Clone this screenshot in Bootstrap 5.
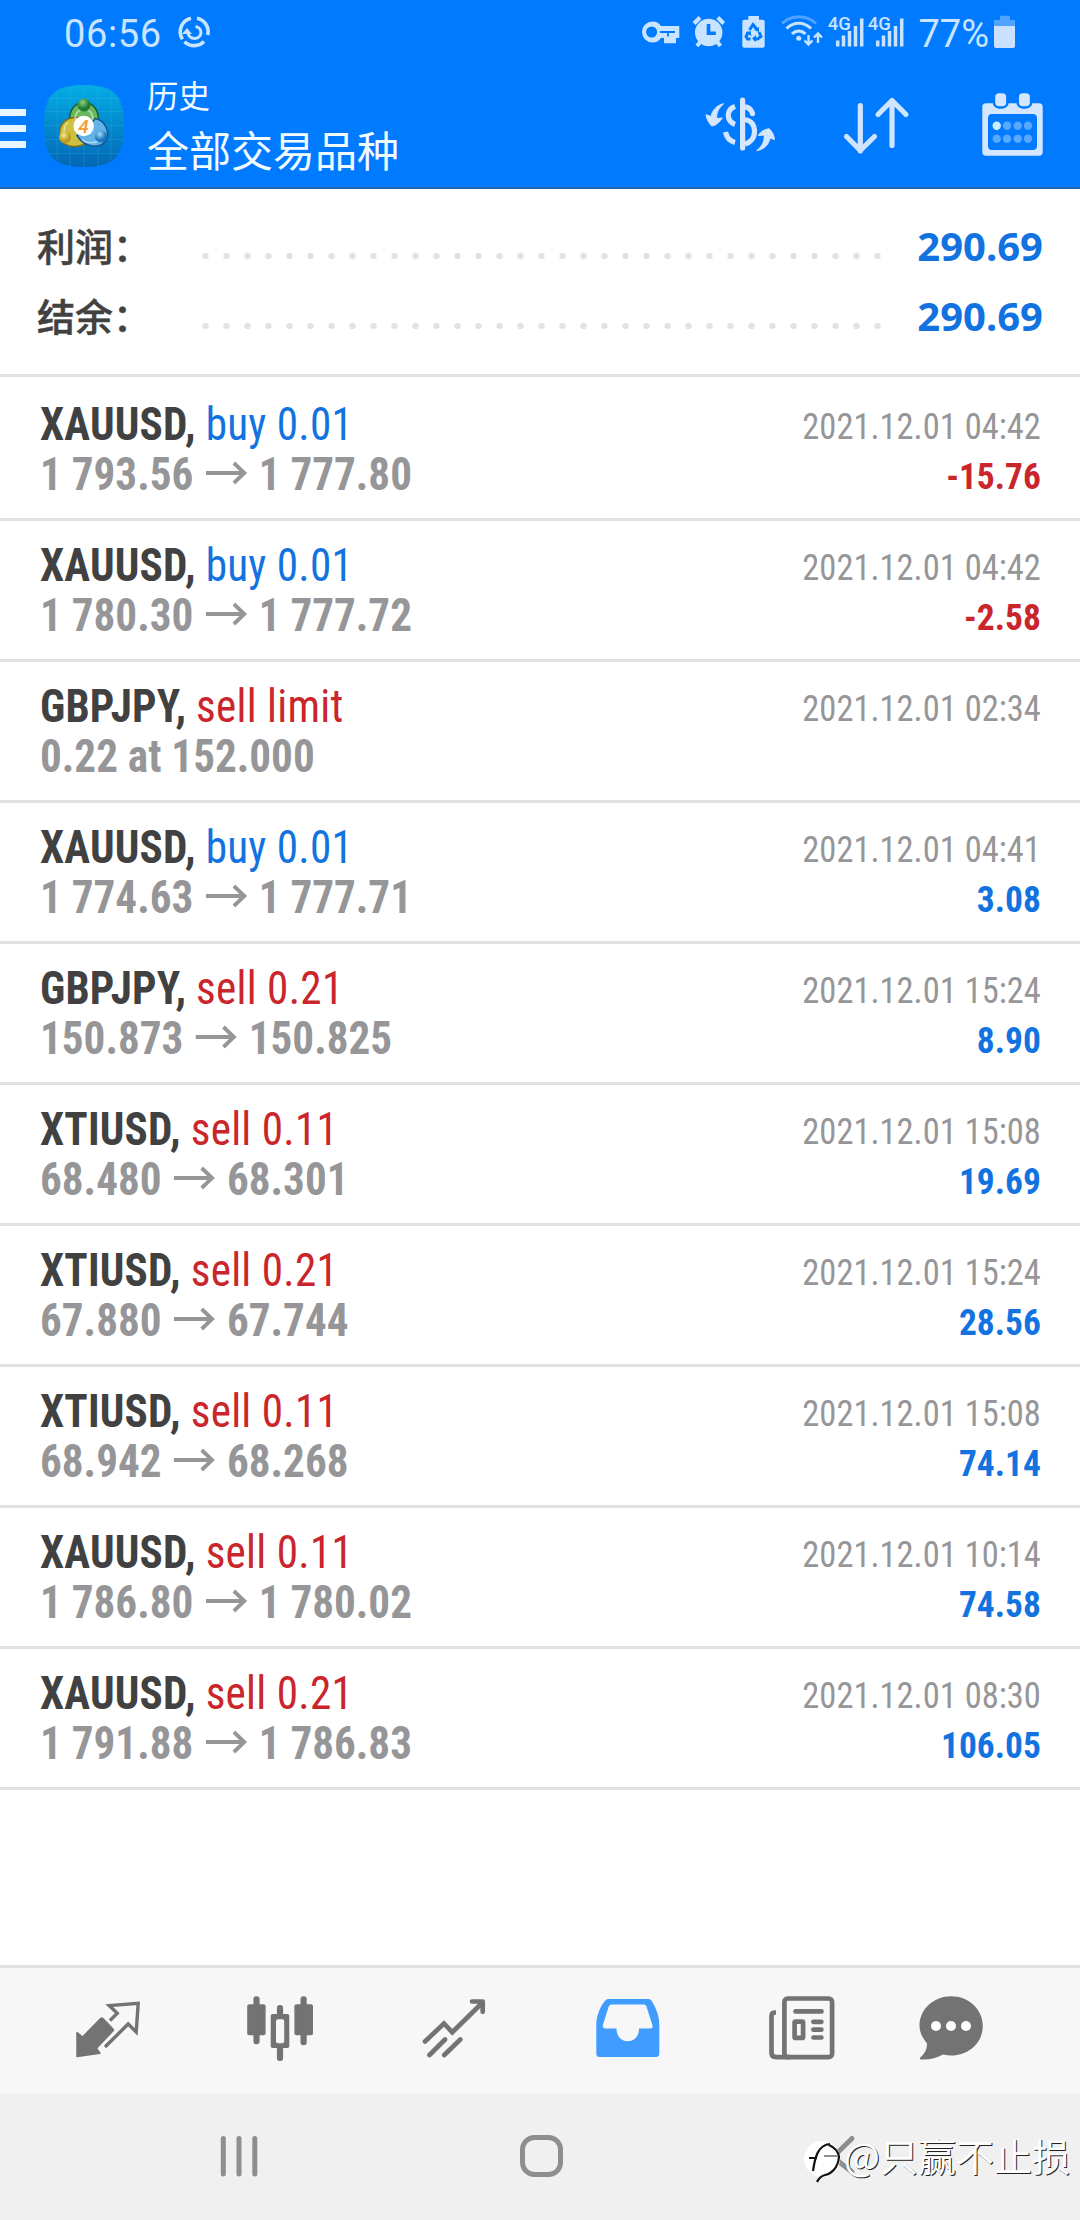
<!DOCTYPE html>
<html lang="zh-CN">
<head>
<meta charset="utf-8">
<meta name="viewport" content="width=device-width, initial-scale=1">
<title>历史</title>
<link href="https://cdn.jsdelivr.net/npm/bootstrap@5.3.0/dist/css/bootstrap.min.css" rel="stylesheet">
<style>
:root{--bar:#007aff;--ice:#c9e4ff;--buy:#1273e0;--sell:#c9252b;--muted:#969698}
body{width:1080px;height:2220px;background:#fff;font-family:Roboto,"Noto Sans CJK SC",sans-serif;overflow:hidden}
svg{display:block;flex:none}
.topbar{height:189px;background:var(--bar);border-bottom:2px solid #1b67b8}
.status{height:66px;padding-left:64px;color:var(--ice);font-size:38px;font-weight:400;line-height:68px}
.clock{width:98px;letter-spacing:.6px}
.syncicon{margin-left:14px}
.sysicons{margin-left:auto}
.battery{margin:0 64px 0 5px}
.toolbar{height:121px}
.burger{width:26px;padding-top:12px}
.burger i{height:7px;margin-bottom:9px;background:#e8f6ff}
.applogo{margin:18.5px 0 0 18px}
.titles{margin-left:23px;padding-top:5px;color:#f2fbff;font-family:"Noto Sans CJK SC",sans-serif}
.t-small{font-size:31.5px;line-height:46px}
.t-big{font-size:42px;line-height:64px}
.summary{height:188px;border-bottom:3px solid #e2e2e2;padding:21px 37px 0 37px}
.sumrow{height:70px;color:#414141}
.sumlabel{font:500 38px/70px "Noto Sans CJK SC",sans-serif;width:165px;-webkit-text-stroke:.5px #414141}
.leader{width:693px;height:8px;margin-top:21px;background:radial-gradient(circle at 50% 50%,#e2e2e2 2.8px,transparent 3.6px) 0 0/21px 8px;margin-left:-7px}
.sumval{font:700 40px/70px "Noto Sans",sans-serif;color:var(--buy);padding-top:1px}
.deal{height:141px;padding:19px 39px 0 40px;border-bottom:3px solid #e2e2e2}
.deal:first-child{height:144px;padding-top:22px}
.deal-l,.deal-r{font-family:"Roboto Condensed",Roboto,sans-serif;line-height:50px;white-space:nowrap}
.deal-l{font-size:45.5px;padding-top:1px;transform:scaleX(.948);transform-origin:0 0}
.deal-r{font-size:37.3px;padding-top:2px;text-align:right}
.deal-r div{transform-origin:100% 0;transform:scaleX(.925)}
.deal-r .profit{transform:scaleX(.95)}
.sym{font-weight:700;color:#414141;letter-spacing:.2px}
.side{letter-spacing:.3px}
.prices{font-weight:700;color:var(--muted)}
.prices svg{display:inline-block;margin:0 12px 0 13px;vertical-align:5px}
.when{color:var(--muted)}
.profit{font-weight:700}
.c-buy{color:var(--buy)}.c-sell{color:var(--sell)}
.tabs{height:129px;background:#f7f7f7;border-top:3px solid #e2e2e2;padding-left:20px}
.tabitem{width:173.6px}
.tabitem:last-child{width:126px}
.sysnav{height:126px;background:#f0f0f0}
.wm{right:10px;top:29px;font:400 38px/64px "Noto Sans CJK SC",sans-serif;color:#fdfdfd;text-shadow:1px 1px 0 #222;white-space:nowrap}
.wmlogo{left:800px;top:34px}
</style>
<script src="https://cdn.jsdelivr.net/npm/bootstrap@5.3.0/dist/js/bootstrap.bundle.min.js"></script>
</head>
<body class="d-flex flex-column">
<header class="topbar flex-shrink-0">
  <div class="status d-flex">
    <span class="clock">06:56</span>
    <svg class="syncicon" width="36" height="66" viewBox="176 0 36 66" fill="none" stroke="#c9e4ff" stroke-width="3.6"><path d="M191 18.2A13.8 13.8 0 0 0 182.500 39.2M184.500 41.700A13.8 13.8 0 0 0 204 41.500M207.700 35A13.8 13.8 0 0 0 197 18.2"/><path d="M188 33a6.500 6 0 1 0 7.500-6.500" stroke-width="3"/><path d="M182 34l5-6 5 6z" fill="#c9e4ff" stroke="none"/></svg>
    <svg class="sysicons" width="274" height="66" viewBox="641 0 274 66" fill="#c9e4ff">
      <path fill-rule="evenodd" d="M653.500 21.500c4 0 7 2 8.500 4.500h18.300v12H677v5.300h-12V38h-3c-2 3-5 4.500-8.500 4.500a10.500 10.500 0 0 1 0-21zM652.600 26.500a5.500 5.500 0 1 0 0 11 5.500 5.500 0 0 0 0-11z"/>
      <path d="M661 32h8v4.500M669 32h7" stroke="#007aff" stroke-width="1.800" fill="none"/>
      <circle cx="709.700" cy="32.500" r="13.700"/><path d="M695 23.500l6-6M724.700 23.500l-6-6M698 46l4-5M721.500 46l-4-5" stroke="#c9e4ff" stroke-width="4"/><path d="M709.500 24v9.200h7.300" fill="none" stroke="#007aff" stroke-width="3.600"/>
      <path d="M749.300 19.700V16h10.700v3.700h3.700q2 0 2 2v24q0 2-2 2h-18.400q-2 0-2-2v-24q0-2 2-2z"/>
      <g fill="none" stroke="#007aff" stroke-width="3"><path d="M750.500 30l3.500-5.500 3.500 4.500M760 32l2 4.500-3.500 2.500h-4M751.500 39h-3l-1.500-2.500 2.500-4.500"/></g><g fill="#007aff"><path d="M755 30l5-3v5zM757 35v7l-4-3.500zM746.500 32.500l5-1.500 1 5z"/></g>
      <g fill="none" stroke="#c9e4ff" stroke-width="3"><path d="M783 23.500c10-9 24-9 34 0" opacity=".4"/><path d="M787.500 28.500c7-7 17.500-7 24.500 0M793 34c4-4 9.500-4 13.500 0"/><path d="M809.500 35v9M805.500 40.500l4 4 4-4M819 43v-9M815 37.500l4-4 4 4" stroke-width="2.400"/></g><circle cx="799.700" cy="38.300" r="2.500"/>
      <g id="sig"><text x="828.700" y="29.500" font-size="19" font-weight="500" textLength="23" lengthAdjust="spacingAndGlyphs">4G</text><path d="M838.700 40.500v6M844.500 35.500v11M850.500 31v15.500M856.500 26v20.500M862.700 18.500v28" stroke="#c9e4ff" stroke-width="3.500"/></g>
      <use href="#sig" x="40"/>
    </svg>
    <span class="percent ms-1">77%</span>
    <svg class="battery" width="22" height="66" viewBox="995 0 22 66" fill="#c9e0ff"><path d="M995 26v-6h6v-4.300h10V20h5v6z" opacity=".4"/><path d="M995 26h21v20q0 2-2 2h-17q-2 0-2-2z"/></svg>
  </div>
  <div class="toolbar d-flex">
    <div class="burger d-flex flex-column justify-content-center"><i></i><i></i><i></i></div>
    <svg class="applogo" width="80" height="82" viewBox="44 84.500 80 82">
      <defs><linearGradient id="bg" x2="0" y2="1"><stop stop-color="#04ade4"/><stop offset=".5" stop-color="#0389cf"/><stop offset="1" stop-color="#0467b4"/></linearGradient>
      <radialGradient id="gg" cx=".4" cy=".3"><stop stop-color="#8fd07c"/><stop offset="1" stop-color="#1d7a35"/></radialGradient><radialGradient id="gy" cx=".4" cy=".3"><stop stop-color="#f6ea90"/><stop offset="1" stop-color="#b99a1d"/></radialGradient><radialGradient id="gb" cx=".4" cy=".3"><stop stop-color="#a5dcf8"/><stop offset="1" stop-color="#1b75bd"/></radialGradient></defs>
      <path d="M84 84.500c30 0 40 10 40 41s-10 41-40 41-40-10-40-41 10-41 40-41z" fill="url(#bg)"/>
      <path d="M57 90v70M70 86v80M84 85v82M98 86v80M111 90v70M48 98h72M44 111h80M44 125h80M44 139h80M48 153h72" stroke="#3cc0e8" stroke-width=".8" opacity=".3"/>
      <g stroke-width="1.500"><path d="M70 122c-2-12 5-20 14-20s16 8 14 20l-8 4H77z" fill="#6cb85c" stroke="#175f30"/><path d="M78 117c-13-1-20 8-18 19 1 8 12 13 24 8l2-12z" fill="#d0c040" stroke="#7b701f"/><path d="M95 118c11 2 15 14 11 22-6 9-22 7-29-5l12-8z" fill="#62b4e8" stroke="#135590"/></g>
      <path d="M75 119c0-14 18-14 18 0M68 122c-5 4-5 12 0 17M82 139c4 4 12 4 17 1" fill="none" stroke="#fff" stroke-width="1.500" opacity=".5"/>
      <circle cx="84" cy="104.500" r="6.500" fill="url(#gg)"/><circle cx="65" cy="137" r="6" fill="url(#gy)"/><circle cx="101" cy="136" r="6" fill="url(#gb)"/>
      <circle cx="83.700" cy="125.500" r="10.200" fill="#fff"/><text x="83.500" y="132.500" font-size="19" font-weight="500" font-style="italic" text-anchor="middle" fill="#f39a32">4</text>
    </svg>
    <div class="titles d-flex flex-column"><span class="t-small">历史</span><span class="t-big">全部交易品种</span></div>
    <svg class="ms-auto" width="376" height="121" viewBox="704 66 376 121" fill="#d5e6ff">
      <g fill="none" stroke="#d5e6ff" stroke-width="5.200"><path d="M742.600 100v48" stroke-linecap="round"/><path d="M735 106.500c-9 3-9 14.500 0 18M725.500 132c1 5 4 9 9.500 10.500M745 106.800c4 .5 6.500 3.500 7.500 6.500"/><path d="M745 119.500c6 1 9.500 5.500 9.500 12s-4 11-9.500 12.500"/><path d="M752.500 113.500v.1" stroke-linecap="round"/></g>
      <path d="M723.700 103.700c-5 4-7.500 9.500-7 14.800l5.600-.5c-2.500 4-6 7.500-10.600 8-3-3-5-7-5.700-11.300l5 1.800c1-6 6-11.500 12.700-12.800zM756.700 150.700c5-4 8-9 7.500-15.700l-6 .5c2.500-4 6-6.200 11-6.800 3 3 5 6.500 5.200 10.800l-4.400-1.500c-1 6.500-6 11.500-13.300 12.700z" stroke="#d5e6ff" stroke-width="1"/>
      <path d="M860.300 105.500V151M846.500 136.500l13.800 14 14.200-14M892 145.500v-45M878 114.500l14-14 14 14" fill="none" stroke="#cfe4ff" stroke-width="5.200" stroke-linecap="round" stroke-linejoin="round"/>
      <path fill-rule="evenodd" d="M986 103.300h53q3.700 0 3.700 3.700v45q0 3.700-3.700 3.700h-53q-3.700 0-3.700-3.700v-45q0-3.700 3.700-3.700zM992 114q-4 0-4 4v28q0 4 4 4h41q4 0 4-4v-28q0-4-4-4z"/>
      <g stroke="#007aff" stroke-width="2.500"><rect x="994" y="92" width="13.400" height="15.400" rx="5"/><rect x="1017.700" y="92" width="13.400" height="15.400" rx="5"/></g>
      <g fill="#58a8ff"><circle cx="1007" cy="125.700" r="4.200"/><circle cx="1017.700" cy="125.700" r="4.200"/><circle cx="1028" cy="125.700" r="4.200"/><circle cx="996.700" cy="138.700" r="4.200"/><circle cx="1007" cy="138.700" r="4.200"/><circle cx="1017.700" cy="138.700" r="4.200"/><circle cx="1028" cy="138.700" r="4.200"/></g><circle cx="996.700" cy="125.700" r="4.200" fill="#cdeeff"/>
    </svg>
  </div>
</header>

<section class="summary flex-shrink-0">
  <div class="sumrow d-flex align-items-center"><span class="sumlabel">利润：</span><span class="leader"></span><span class="sumval ms-auto">290.69</span></div>
  <div class="sumrow d-flex align-items-center"><span class="sumlabel">结余：</span><span class="leader"></span><span class="sumval ms-auto">290.69</span></div>
</section>

<main class="flex-grow-1" id="deals"></main>

<nav class="tabs d-flex align-items-center flex-shrink-0">
  <div class="tabitem d-flex justify-content-center"><svg width="76" height="80" viewBox="69 1991 76 80"><path d="M77 2032.500l5.600 4.500 18-18.500q1-1 2.300 0l10 10.500q1 1 0 2l-16.500 17.300 3.500 5-22.900 3.200z" fill="#737373" stroke="#737373" stroke-width="1.500" stroke-linejoin="round"/><path d="M110 2020.500l7.300-7.200-8-7.700 28.900-2.200-2 28.600-8-8L105 2047" fill="none" stroke="#737373" stroke-width="3.400"/></svg></div>
  <div class="tabitem d-flex justify-content-center"><svg width="76" height="80" viewBox="242 1991 76 80" fill="#737373"><rect x="247.200" y="2004.300" width="18.400" height="31" rx="2"/><rect x="253.400" y="1996.300" width="6.200" height="48" rx="3"/><rect x="294.400" y="2004.300" width="18.600" height="31" rx="2"/><rect x="300.500" y="1996.300" width="6.200" height="49" rx="3"/><rect x="276.900" y="2005" width="6.200" height="56" rx="3"/><rect x="270.700" y="2014" width="18.600" height="34" rx="2"/><rect x="276" y="2019.300" width="8.200" height="24" rx="2" fill="#f7f7f7"/></svg></div>
  <div class="tabitem d-flex justify-content-center"><svg width="76" height="80" viewBox="415.500 1991 76 80" fill="none" stroke="#737373" stroke-width="4.700" stroke-linejoin="round"><path d="M424.500 2041.500l19-18 8.300 8.800 30-29.500M429 2055l15.500-15.500M443.800 2055l16-15.500" stroke-linecap="round" stroke-linejoin="miter"/><path d="M471.500 2001.500h10.700v10.300" stroke-linecap="round"/></svg></div>
  <div class="tabitem d-flex justify-content-center"><svg width="76" height="80" viewBox="589.500 1991 76 80" fill="#419cff"><path fill-rule="evenodd" d="M608 1999h40q2 0 3.300 2c5 8 7.500 16 7.500 24v28.500q0 3.500-3.500 3.500h-56q-3.500 0-3.500-3.500V2025c0-8 3-17 8.500-24q1.500-2 3.700-2zM611 2004.500q-2 0-2.700 1.700l-6 19q-.7 3.300 2.200 3.300H616c0 17 22.500 17 22.500 0H650q2.700 0 1.900-3.300l-6-19q-.6-1.700-2.700-1.700z"/></svg></div>
  <div class="tabitem d-flex justify-content-center"><svg width="76" height="80" viewBox="763 1991 76 80" fill="none" stroke="#737373" stroke-width="4.700" stroke-linecap="round"><rect x="784.400" y="1998.500" width="47.700" height="58.700" rx="3.500"/><path d="M776 2012.500h-1.500q-3 0-3 4v36q0 4.700 4.700 4.700H790" stroke-linecap="butt"/><path d="M795.500 2011.400h26M813.400 2021.800h8M813.400 2029.700h8M813.400 2037.500h8"/><rect x="794.600" y="2021.600" width="8.500" height="16.300" rx="1"/></svg></div>
  <div class="tabitem d-flex justify-content-center"><svg width="76" height="80" viewBox="913 1991 76 80"><path d="M951.200 1996.300c17.500 0 31.600 13 31.600 29.700s-14 29.500-31.600 29.500q-4 0-8.200-1c-6 3.500-14 5.500-21.500 5-2 0-2-1.500-.7-2.500 4-3.500 6.700-8 6-14-4.400-5-7.300-11-7.300-17.500 0-16.500 14.500-29.200 31.700-29.200z" fill="#737373"/><g fill="#fff"><circle cx="936" cy="2026" r="5"/><circle cx="951" cy="2026" r="5"/><circle cx="966" cy="2026" r="5"/></g></svg></div>
</nav>
<footer class="sysnav position-relative flex-shrink-0">
  <svg width="1080" height="126" viewBox="0 2094 1080 126" fill="none" stroke="#8e8e8e" stroke-width="5" stroke-linecap="round"><path d="M223.300 2138.500v35.500M239 2138.500v35.500M254.800 2138.500v35.500"/><rect x="522.500" y="2137.500" width="38" height="37" rx="12"/><path d="M852 2138.500l-19 18.500 19 15"/></svg>
  <svg class="wmlogo position-absolute" width="46" height="56" viewBox="800 2128 46 56"><circle cx="822" cy="2159" r="18" fill="#fff"/><path d="M813 2171c2-14 5-26 17-27M829 2145q9 4 10 12c-1 11-8 17-14 18q-5 1-8 7M809 2158h8" fill="none" stroke="#111" stroke-width="2.200"/><path d="M824 2156h14" stroke="#8e8e8e" stroke-width="2"/></svg>
  <div class="wm position-absolute">@只赢不止损</div>
</footer>

<script>
const deals=[
 ['XAUUSD','buy','0.01','1 793.56','1 777.80','04:42','-15.76'],
 ['XAUUSD','buy','0.01','1 780.30','1 777.72','04:42','-2.58'],
 ['GBPJPY','sell','limit','0.22 at 152.000','','02:34',''],
 ['XAUUSD','buy','0.01','1 774.63','1 777.71','04:41','3.08'],
 ['GBPJPY','sell','0.21','150.873','150.825','15:24','8.90'],
 ['XTIUSD','sell','0.11','68.480','68.301','15:08','19.69'],
 ['XTIUSD','sell','0.21','67.880','67.744','15:24','28.56'],
 ['XTIUSD','sell','0.11','68.942','68.268','15:08','74.14'],
 ['XAUUSD','sell','0.11','1 786.80','1 780.02','10:14','74.58'],
 ['XAUUSD','sell','0.21','1 791.88','1 786.83','08:30','106.05']];
const arrow='<svg width="44" height="24" viewBox="0 0 44 24" fill="none" stroke="#969698" stroke-width="4"><path d="M0 12h41M29.500 2l11 10-11 10"/></svg>';
document.getElementById('deals').innerHTML=deals.map(([s,d,v,a,b,t,p])=>`
<div class="deal d-flex justify-content-between">
  <div class="deal-l"><div><span class="sym">${s},</span> <span class="side c-${d}">${d} ${v}</span></div><div class="prices">${a}${b?arrow+b:''}</div></div>
  <div class="deal-r"><div class="when">2021.12.01 ${t}</div><div class="profit ${p[0]==='-'?'c-sell':'c-buy'}">${p}</div></div>
</div>`).join('');
</script>
</body>
</html>
